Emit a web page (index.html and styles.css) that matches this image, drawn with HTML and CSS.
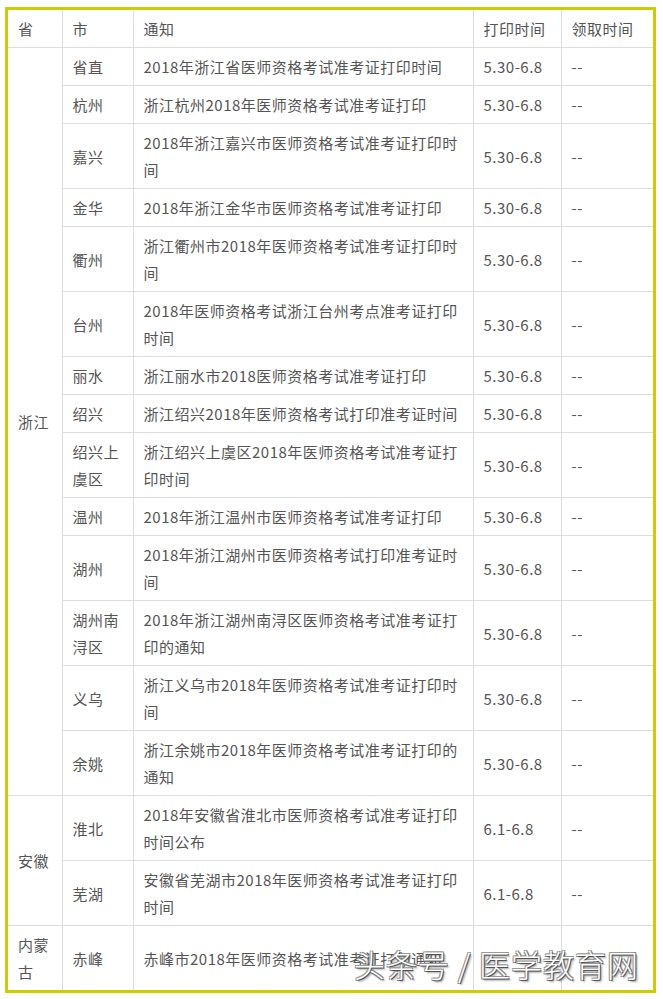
FILE: index.html
```html
<!DOCTYPE html>
<html lang="zh">
<head>
<meta charset="utf-8">
<link rel="stylesheet" href="styles.css">
</head>
<body>
<div class="frame">
<table class="tbl">
<colgroup><col class="c1"><col class="c2"><col class="c3"><col class="c4"><col class="c5"></colgroup>
<tr><td>省</td><td>市</td><td>通知</td><td>打印时间</td><td>领取时间</td></tr>
<tr><td rowspan="14">浙江</td><td>省直</td><td>2018年浙江省医师资格考试准考证打印时间</td><td>5.30-6.8</td><td>--</td></tr>
<tr><td>杭州</td><td>浙江杭州2018年医师资格考试准考证打印</td><td>5.30-6.8</td><td>--</td></tr>
<tr><td>嘉兴</td><td>2018年浙江嘉兴市医师资格考试准考证打印时间</td><td>5.30-6.8</td><td>--</td></tr>
<tr><td>金华</td><td>2018年浙江金华市医师资格考试准考证打印</td><td>5.30-6.8</td><td>--</td></tr>
<tr><td>衢州</td><td>浙江衢州市2018年医师资格考试准考证打印时间</td><td>5.30-6.8</td><td>--</td></tr>
<tr><td>台州</td><td>2018年医师资格考试浙江台州考点准考证打印时间</td><td>5.30-6.8</td><td>--</td></tr>
<tr><td>丽水</td><td>浙江丽水市2018医师资格考试准考证打印</td><td>5.30-6.8</td><td>--</td></tr>
<tr><td>绍兴</td><td>浙江绍兴2018年医师资格考试打印准考证时间</td><td>5.30-6.8</td><td>--</td></tr>
<tr><td>绍兴上虞区</td><td>浙江绍兴上虞区2018年医师资格考试准考证打印时间</td><td>5.30-6.8</td><td>--</td></tr>
<tr><td>温州</td><td>2018年浙江温州市医师资格考试准考证打印</td><td>5.30-6.8</td><td>--</td></tr>
<tr><td>湖州</td><td>2018年浙江湖州市医师资格考试打印准考证时间</td><td>5.30-6.8</td><td>--</td></tr>
<tr><td>湖州南浔区</td><td>2018年浙江湖州南浔区医师资格考试准考证打印的通知</td><td>5.30-6.8</td><td>--</td></tr>
<tr><td>义乌</td><td>浙江义乌市2018年医师资格考试准考证打印时间</td><td>5.30-6.8</td><td>--</td></tr>
<tr><td>余姚</td><td>浙江余姚市2018年医师资格考试准考证打印的通知</td><td>5.30-6.8</td><td>--</td></tr>
<tr><td rowspan="2">安徽</td><td>淮北</td><td>2018年安徽省淮北市医师资格考试准考证打印时间公布</td><td>6.1-6.8</td><td>--</td></tr>
<tr><td>芜湖</td><td>安徽省芜湖市2018年医师资格考试准考证打印时间</td><td>6.1-6.8</td><td>--</td></tr>
<tr><td>内蒙古</td><td>赤峰</td><td>赤峰市2018年医师资格考试准考证打印通知</td><td></td><td></td></tr>
</table>
<div class="mark">头条号 / 医学教育网</div>
</div>
</body>
</html>
```

FILE: styles.css
```css
html, body {
  margin: 0;
  padding: 0;
  background: #ffffff;
}
body {
  padding: 7px 0 0 5px;
}
.frame {
  position: relative;
  width: 645px;
  border: 3px solid #cccc00;
}
.tbl {
  width: 645px;
  table-layout: fixed;
  border-collapse: collapse;
  border-style: hidden;
  font-family: "Noto Sans CJK SC", "Microsoft YaHei", sans-serif;
  font-size: 15px;
  letter-spacing: 0.5px;
  color: #555555;
}
.c1 { width: 54px; }
.c2 { width: 71px; }
.c3 { width: 340px; }
.c4 { width: 88px; }
.c5 { width: 92px; }
.tbl td {
  border: 1px solid #dddddd;
  padding: 5px 10px;
  line-height: 27px;
  vertical-align: middle;
  word-break: break-all;
}
.mark {
  position: absolute;
  right: 14px;
  bottom: 4px;
  font-family: "Noto Sans CJK SC", sans-serif;
  font-size: 31px;
  font-weight: 300;
  letter-spacing: 1px;
  color: #ffffff;
  text-shadow: 1px 1px 0 #555, -1px -1px 0 #999, 1px -1px 0 #888, -1px 1px 0 #888, 2px 2px 2px rgba(0,0,0,0.4);
}
```
